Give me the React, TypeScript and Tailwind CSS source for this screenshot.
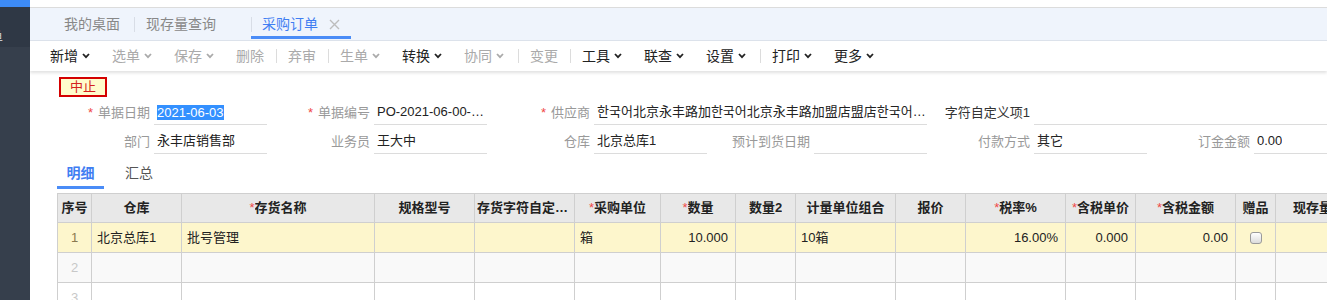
import React from "react";

const FONT = "font-['Liberation_Sans','Noto_Sans_CJK_SC',sans-serif]";

type Tool = { t: string; arrow?: boolean; on?: boolean; w: string; sep?: boolean };

const TOOLS: Tool[] = [
  { t: "新增", arrow: true, on: true, w: "w-[62px]" },
  { t: "选单", arrow: true, w: "w-[62px]" },
  { t: "保存", arrow: true, w: "w-[62px]" },
  { t: "删除", w: "w-[28px]", sep: true },
  { t: "弃审", w: "w-[28px]", sep: true },
  { t: "生单", arrow: true, w: "w-[62px]" },
  { t: "转换", arrow: true, on: true, w: "w-[62px]" },
  { t: "协同", arrow: true, w: "w-[42px]", sep: true },
  { t: "变更", w: "w-[28px]", sep: true },
  { t: "工具", arrow: true, on: true, w: "w-[62px]" },
  { t: "联查", arrow: true, on: true, w: "w-[62px]" },
  { t: "设置", arrow: true, on: true, w: "w-[42px]", sep: true },
  { t: "打印", arrow: true, on: true, w: "w-[62px]" },
  { t: "更多", arrow: true, on: true, w: "w-[62px]" },
];

const COLS: [string, boolean][] = [
  ["序号", false],
  ["仓库", false],
  ["存货名称", true],
  ["规格型号", false],
  ["存货字符自定义项1", false],
  ["采购单位", true],
  ["数量", true],
  ["数量2", false],
  ["计量单位组合", false],
  ["报价", false],
  ["税率%", true],
  ["含税单价", true],
  ["含税金额", true],
  ["赠品", false],
  ["现存量", false],
];

const ROW1: { v: string; align: "l" | "r" | "c" }[] = [
  { v: "1", align: "c" },
  { v: "北京总库1", align: "l" },
  { v: "批号管理", align: "l" },
  { v: "", align: "l" },
  { v: "", align: "l" },
  { v: "箱", align: "l" },
  { v: "10.000", align: "r" },
  { v: "", align: "l" },
  { v: "10箱", align: "l" },
  { v: "", align: "l" },
  { v: "16.00%", align: "r" },
  { v: "0.000", align: "r" },
  { v: "0.00", align: "r" },
  { v: "chk", align: "c" },
  { v: "", align: "l" },
];

function Chevron() {
  return (
    <svg width="8" height="6" viewBox="0 0 8 6" className="ml-[4px]">
      <polyline points="1,1 4,4.2 7,1" fill="none" stroke="currentColor" strokeWidth="1.8" />
    </svg>
  );
}

function Field({
  label,
  req,
  value,
  wide,
  dark,
  selected,
}: {
  label: string;
  req?: boolean;
  value?: string;
  wide?: boolean;
  dark?: boolean;
  selected?: boolean;
}) {
  return (
    <div className="flex items-end mr-[3px] shrink-0">
      <div
        className={`w-[104px] pr-[4px] h-[25px] flex items-center justify-end text-[13px] whitespace-nowrap ${
          dark ? "text-[#333]" : "text-[#999]"
        }`}
      >
        {req && <span className="text-[#f04848] mr-[5px]">*</span>}
        {label}
      </div>
      <div
        className={`${
          wide ? "w-[333px]" : "w-[113px]"
        } h-[25px] border-b border-[#dcdcdc] flex items-center pl-[3px] text-[13px] text-[#222] overflow-hidden`}
      >
        {selected ? (
          <span className="bg-[#3390ff] text-white leading-[15px]">{value}</span>
        ) : (
          <span className="truncate">{value}</span>
        )}
      </div>
    </div>
  );
}

const GRID =
  "grid grid-cols-[34px_90px_193px_100px_100px_86px_75px_60px_100px_70px_100px_70px_100px_40px_74px]";

export default function App() {
  return (
    <div className={`w-[1327px] h-[300px] overflow-hidden flex bg-white ${FONT}`}>
      {/* sidebar */}
      <div className="w-[30px] shrink-0 flex flex-col">
        <div className="h-[7px] shrink-0 bg-[#3d8bf6]" />
        <div className="h-[40px] shrink-0 bg-[#2f3845] overflow-hidden">
          <div className="ml-[-11px] mt-[20px] text-[14px] text-[#c4c8ce]">单</div>
        </div>
        <div className="flex-1 bg-[#363f4c]" />
      </div>

      {/* main */}
      <div className="flex-1 min-w-0 overflow-hidden">
        <div className="h-[8px] border-b border-[#dcdcdc] bg-white" />
        {/* page tabs */}
        <div className="h-[33px] bg-[#eff4fc] border-b border-[#dde3ec] flex pl-[23px] text-[14px]">
          <div className="flex items-center pl-[11px] pr-[14px] text-[#888]">我的桌面</div>
          <div className="w-px h-[15px] self-center bg-[#d8dde6]" />
          <div className="flex items-center pl-[11px] text-[#888]">
            现存量查询
            <span className="w-[35px]" />
          </div>
          <div className="w-px h-[15px] self-center bg-[#d8dde6]" />
          <div className="relative flex items-center pl-[10px] pr-[11px] text-[#3f7ef2]">
            采购订单
            <svg width="11" height="11" viewBox="0 0 11 11" className="ml-[11px]">
              <path d="M1 1 L10 10 M10 1 L1 10" stroke="#bdbdbd" strokeWidth="1.4" />
            </svg>
            <div className="absolute left-[-1px] right-0 bottom-[1px] h-[3px] bg-[#4a8cf7]" />
          </div>
        </div>

        {/* toolbar */}
        <div className="h-[30px] flex items-center pl-[20px] text-[14px] shadow-[0_2px_3px_rgba(0,0,0,0.12)] relative">
          {TOOLS.map((t) => (
            <React.Fragment key={t.t}>
              <div className={`${t.w} shrink-0 flex items-center ${t.on ? "text-[#222]" : "text-[#aaa]"}`}>
                <span className="whitespace-nowrap">{t.t}</span>
                {t.arrow && <Chevron />}
              </div>
              {t.sep && (
                <div className="w-[24px] shrink-0 flex justify-center">
                  <div className="w-px h-[14px] bg-[#dcdcdc]" />
                </div>
              )}
            </React.Fragment>
          ))}
        </div>

        {/* form */}
        <div className="mt-[6px] ml-[29px] w-[48px] h-[20px] border-2 border-[#d40000] bg-[#fffccc] text-[#d42020] text-[13px] flex items-center justify-center">
          中止
        </div>
        <div className="ml-[20px] mt-[3px] flex">
          <Field label="单据日期" req value="2021-06-03" selected />
          <Field label="单据编号" req value="PO-2021-06-00-0001" />
          <Field
            label="供应商"
            req
            wide
            value="한국어北京永丰路加한국어北京永丰路加盟店盟店한국어北京永丰路加盟店"
          />
          <Field label="字符自定义项1" dark wide value="" />
        </div>
        <div className="ml-[20px] mt-[4px] flex">
          <Field label="部门" value="永丰店销售部" />
          <Field label="业务员" value="王大中" />
          <Field label="仓库" value="北京总库1" />
          <Field label="预计到货日期" value="" />
          <Field label="付款方式" value="其它" />
          <Field label="订金金额" value="0.00" />
        </div>

        {/* detail tabs */}
        <div className="mt-[4px] ml-[27px] flex h-[31px] text-[14px]">
          <div className="w-[47px] flex items-center justify-center pt-[2px] font-semibold text-[#3f7ef2] border-b-[3px] border-[#4a8cf7]">
            明细
          </div>
          <div className="ml-[21px] flex items-center text-[#555] pb-[1px]">汇总</div>
        </div>

        {/* grid */}
        <div className="mt-[4px] ml-[27px] w-max border-l border-t border-[#cfcfcf] text-[13px]">
          <div className={`${GRID} bg-[#e8e8e8]`}>
            {COLS.map(([c, req]) => (
              <div
                key={c}
                className="h-[29px] border-r border-b border-[#cfcfcf] flex items-center justify-center px-[2px] font-bold text-[#222] overflow-hidden whitespace-nowrap"
              >
                {req && <span className="text-[#f04848] font-normal">*</span>}
                <span className="truncate">{c}</span>
              </div>
            ))}
          </div>
          <div className={`${GRID} bg-[#fdf6cc]`}>
            {ROW1.map((c, i) => (
              <div
                key={i}
                className={`h-[30px] border-r border-b border-[#cfcfcf] flex items-center px-[7px] ${
                  c.align === "r" ? "justify-end" : c.align === "c" ? "justify-center" : "justify-start pl-[5px]"
                } ${i === 0 ? "text-[#8a7a50]" : "text-[#222]"}`}
              >
                {c.v === "chk" ? (
                  <div className="w-[12px] h-[12px] rounded-[3px] border border-[#9a9a9a] bg-gradient-to-b from-white to-[#dcdcdc]" />
                ) : (
                  c.v
                )}
              </div>
            ))}
          </div>
          {["2", "3"].map((n) => (
            <div key={n} className={`${GRID} ${n === "2" ? "bg-[#f9f9f9]" : "bg-white"}`}>
              {COLS.map(([c], i) => (
                <div
                  key={c}
                  className="h-[30px] border-r border-b border-[#cfcfcf] flex items-center justify-center text-[#c8c8c8]"
                >
                  {i === 0 ? n : ""}
                </div>
              ))}
            </div>
          ))}
        </div>
      </div>
    </div>
  );
}
